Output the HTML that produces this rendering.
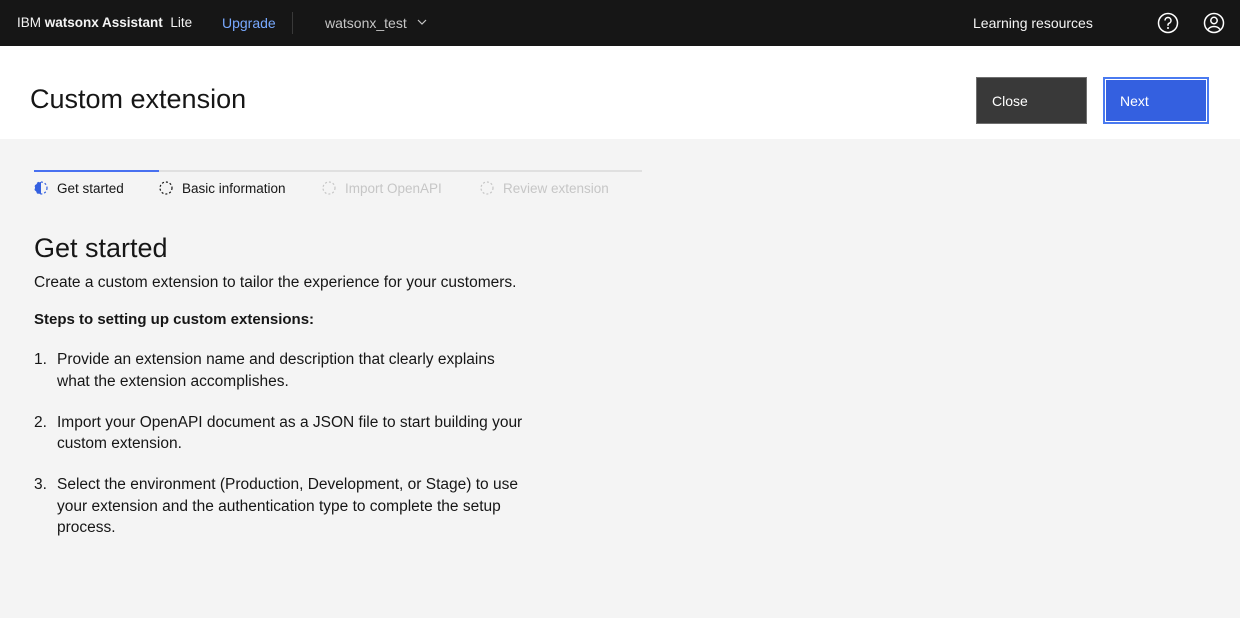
<!DOCTYPE html>
<html><head><meta charset="utf-8"><style>
*{margin:0;padding:0;box-sizing:border-box}
body{width:1240px;height:618px;overflow:hidden;background:#f4f4f4;font-family:"Liberation Sans",sans-serif;color:#161616;position:relative}
.top{position:absolute;left:0;top:0;width:1240px;height:46px;background:#161616;color:#f4f4f4;font-size:14px}
.top span{position:absolute;top:15px;white-space:nowrap}
.hdr{position:absolute;left:0;top:46px;width:1240px;height:93px;background:#fff}
.btn{position:absolute;top:77px;height:47px;color:#fff;font-size:14px;padding:15px 15px}
.abs{position:absolute;white-space:nowrap}
ol{position:absolute;left:34px;top:349px;list-style:none;font-size:15.5px;line-height:21.5px;width:600px;white-space:nowrap}
ol li{position:relative;padding-left:23px;margin-bottom:19.5px}
ol li b{position:absolute;left:0;font-weight:normal}
</style></head><body>
<div class="top">
<span style="left:17px;font-size:13.5px">IBM <b>watsonx Assistant</b>&nbsp; Lite</span>
<span style="left:222px;color:#78a9ff">Upgrade</span>
<div style="position:absolute;left:292px;top:12px;width:1px;height:22px;background:#393939"></div>
<span style="left:325px;color:#c6c6c6">watsonx_test</span>
<svg class="abs" style="left:417px;top:18px" width="10" height="8" viewBox="0 0 10 8"><path d="M1 2l4 4 4-4" fill="none" stroke="#c6c6c6" stroke-width="1.2"/></svg>
<span style="left:973px">Learning resources</span>
<svg class="abs" style="left:1157px;top:12px" width="22" height="22" viewBox="0 0 22 22"><circle cx="11" cy="11" r="9.5" fill="none" stroke="#fff" stroke-width="1.5"/><path d="M8 8.5a3 3 0 1 1 4 2.8c-.8.4-1 .9-1 1.7v.8" fill="none" stroke="#fff" stroke-width="1.5"/><circle cx="11" cy="16" r="1" fill="#fff"/></svg>
<svg class="abs" style="left:1203px;top:12px" width="22" height="22" viewBox="0 0 22 22"><circle cx="11" cy="11" r="9.5" fill="none" stroke="#fff" stroke-width="1.5"/><circle cx="11" cy="8.5" r="3.2" fill="none" stroke="#fff" stroke-width="1.5"/><path d="M5 17.5c1.5-2.3 3.5-3 6-3s4.5.7 6 3" fill="none" stroke="#fff" stroke-width="1.5"/></svg>
</div>
<div class="hdr"><div class="abs" style="left:30px;top:38px;font-size:27px;font-weight:300;color:#161616">Custom extension</div></div>
<div class="btn" style="left:976px;width:111px;background:#393939;border:1px solid #6f6f6f">Close</div>
<div class="btn" style="left:1103px;width:106px;background:#3460e0;border:2px solid #4a7af0;box-shadow:inset 0 0 0 1px #fff;padding-top:14px">Next</div>
<div class="abs" style="left:34px;top:170px;width:608px;height:2px;background:#e0e0e0"></div>
<div class="abs" style="left:34px;top:170px;width:125px;height:2px;background:#4870f0"></div>
<svg class="abs" style="left:34px;top:181px" width="14" height="14" viewBox="0 0 14 14"><path d="M7 1a6 6 0 0 0 0 12z" fill="#3460e0"/><circle cx="7" cy="7" r="6" fill="none" stroke="#3460e0" stroke-width="1.2" stroke-dasharray="2 2"/></svg>
<div class="abs" style="left:57px;top:181px;font-size:13.5px">Get started</div>
<svg class="abs" style="left:159px;top:181px" width="14" height="14" viewBox="0 0 14 14"><circle cx="7" cy="7" r="6" fill="none" stroke="#161616" stroke-width="1.2" stroke-dasharray="2 2"/></svg>
<div class="abs" style="left:182px;top:181px;font-size:13.5px">Basic information</div>
<svg class="abs" style="left:322px;top:181px" width="14" height="14" viewBox="0 0 14 14"><circle cx="7" cy="7" r="6" fill="none" stroke="#c6c6c6" stroke-width="1.2" stroke-dasharray="2 2"/></svg>
<div class="abs" style="left:345px;top:181px;font-size:13.5px;color:#c6c6c6">Import OpenAPI</div>
<svg class="abs" style="left:480px;top:181px" width="14" height="14" viewBox="0 0 14 14"><circle cx="7" cy="7" r="6" fill="none" stroke="#c6c6c6" stroke-width="1.2" stroke-dasharray="2 2"/></svg>
<div class="abs" style="left:503px;top:181px;font-size:13.5px;color:#c6c6c6">Review extension</div>
<div class="abs" style="left:34px;top:233px;font-size:27px;font-weight:300">Get started</div>
<div class="abs" style="left:34px;top:274px;font-size:15.5px">Create a custom extension to tailor the experience for your customers.</div>
<div class="abs" style="left:34px;top:311px;font-size:15px;font-weight:bold">Steps to setting up custom extensions:</div>
<ol>
<li><b>1.</b>Provide an extension name and description that clearly explains<br>what the extension accomplishes.</li>
<li><b>2.</b>Import your OpenAPI document as a JSON file to start building your<br>custom extension.</li>
<li><b>3.</b>Select the environment (Production, Development, or Stage) to use<br>your extension and the authentication type to complete the setup<br>process.</li>
</ol>
</body></html>
